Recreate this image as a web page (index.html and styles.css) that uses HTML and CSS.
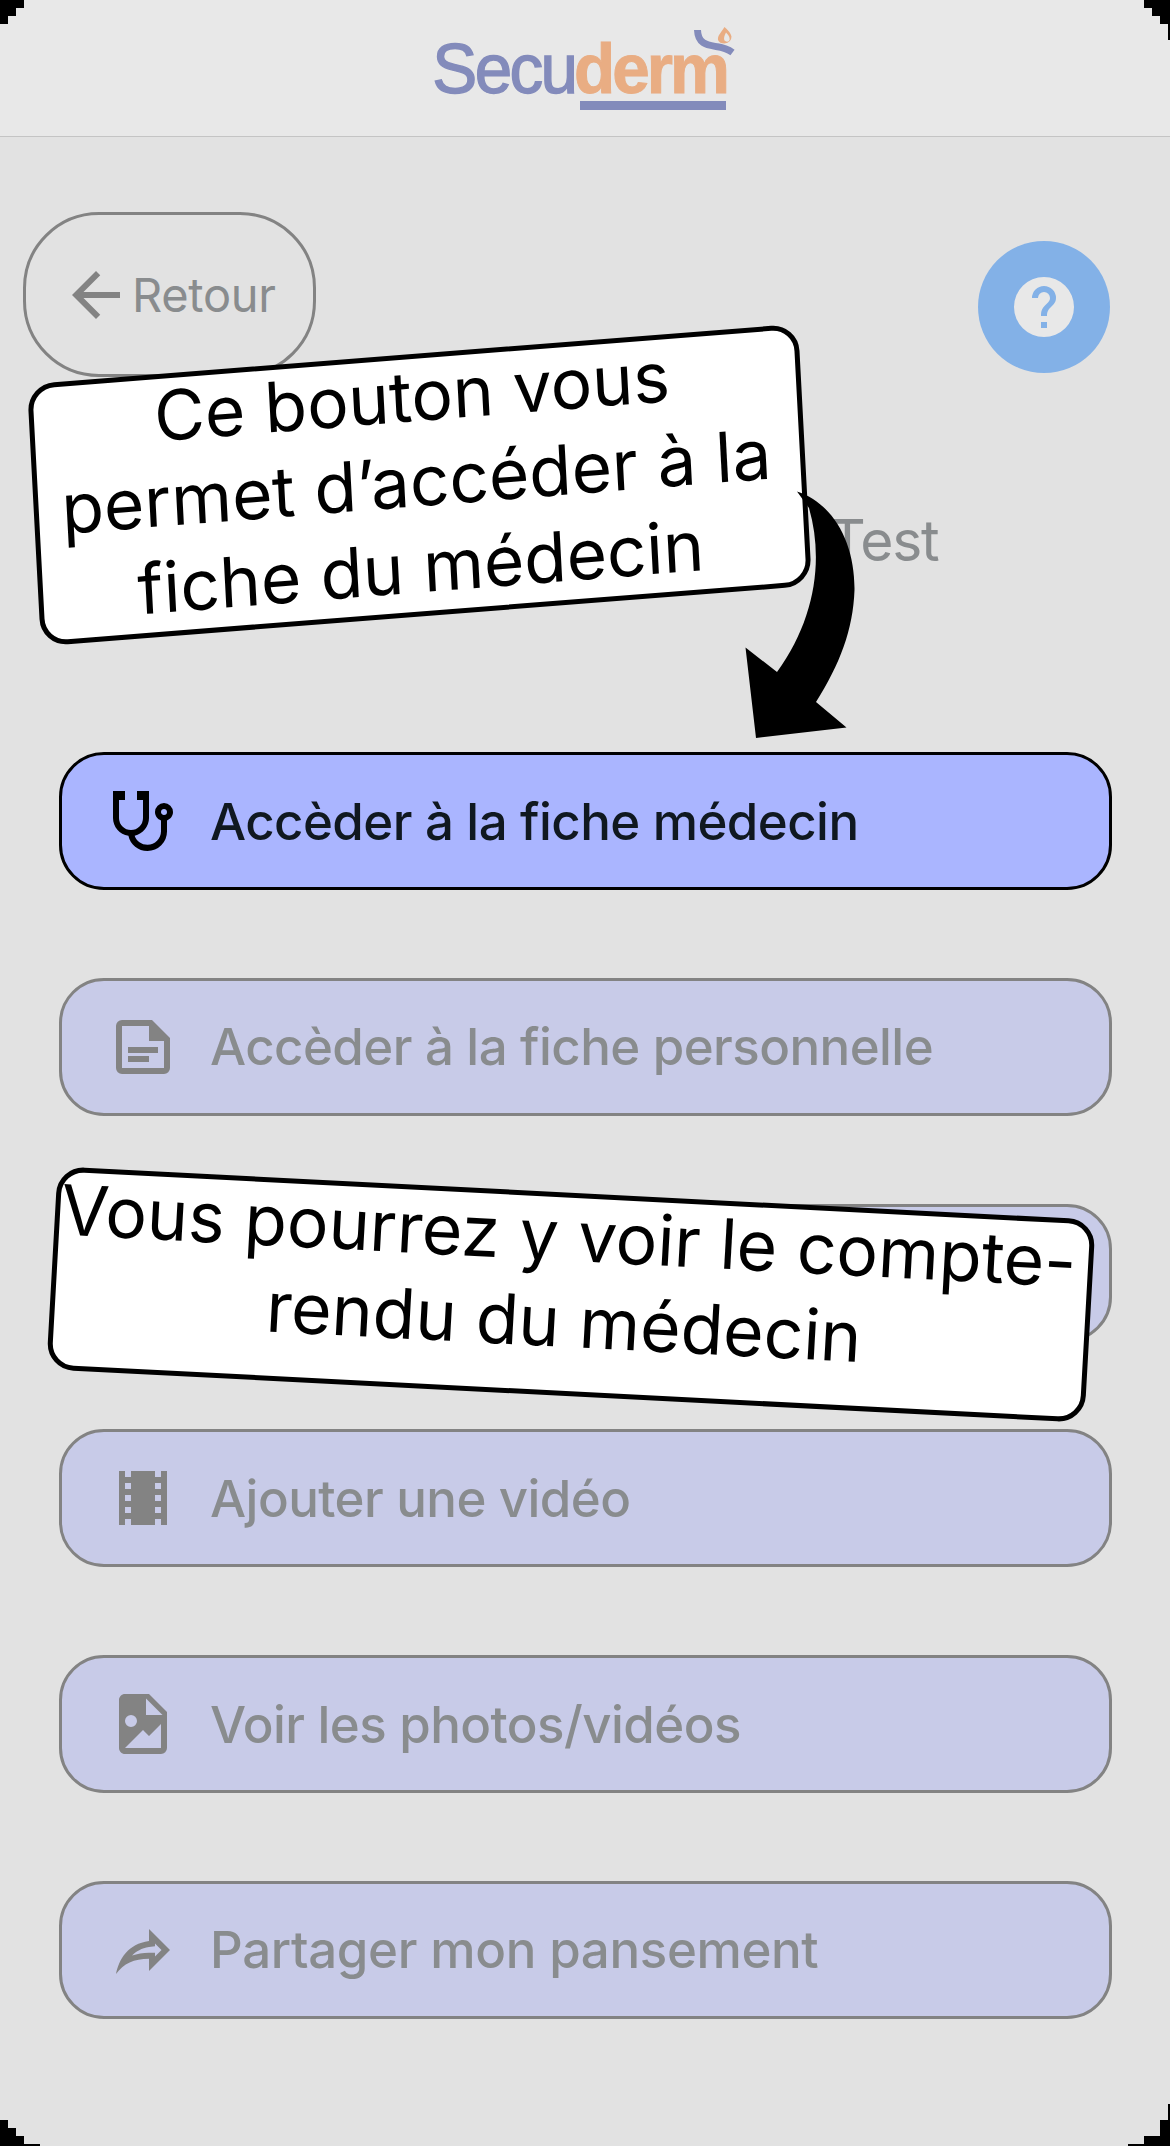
FILE: index.html
```html
<!DOCTYPE html>
<html lang="fr">
<head>
<meta charset="utf-8">
<title>Secuderm</title>
<link rel="stylesheet" href="styles.css">
</head>
<body>
<header class="topbar">
  <svg class="logo" viewBox="0 0 310 100" width="310" height="100">
    <text transform="scale(0.95 1)" x="-2.800" y="73"><tspan class="logo-secu">Secu</tspan><tspan class="logo-derm" dx="-1.500">derm</tspan></text>
    <rect class="logo-line" x="145" y="81" width="146" height="9"/>
    <path class="logo-swoosh" d="M262.500 10C263 24 272 25 281 26.500C288 27.500 292 28.500 297.500 32.500"/>
    <path class="logo-flame" fill-rule="evenodd" d="M289.500 7C286 13 282.500 15 283 20Q284.500 23.500 289.500 23.500Q296.500 22.500 296.500 16.500Q295.500 12 289.500 7ZM291 12.500Q296.500 18 294 21Q291.500 22.500 289.500 20.500Q288 18 291 12.500Z"/>
  </svg>
</header>
<main class="screen">
  <div class="toolbar">
    <button class="back">
      <svg class="icon" viewBox="0 0 24 24"><path d="M20 11H7.83l5.59-5.59L12 4l-8 8 8 8 1.41-1.41L7.83 13H20z"/></svg>
      <span>Retour</span>
    </button>
    <button class="help" aria-label="Aide">
      <svg class="icon" viewBox="0 0 24 24"><path d="M12 2a10 10 0 1 0 0 20 10 10 0 0 0 0-20zm1 17h-2v-2h2zm2.07-7.75l-.9.92C13.45 12.9 13 13.5 13 15h-2v-.5c0-1.1.45-2.1 1.17-2.83l1.24-1.26c.37-.36.59-.86.59-1.41a2 2 0 0 0-4 0H8a4 4 0 0 1 8 0c0 .88-.36 1.68-.93 2.25z"/></svg>
    </button>
  </div>
  <h1 class="title">Test</h1>
  <nav class="menu">
    <a class="card active">
      <svg class="icon" viewBox="0 0 24 24"><path d="M19,8C19.56,8 20,8.43 20,9A1,1 0 0,1 19,10C18.43,10 18,9.55 18,9C18,8.43 18.43,8 19,8M2,2V11C2,13.96 4.19,16.5 7.14,16.91C7.76,19.92 10.42,22 13.5,22A6.5,6.5 0 0,0 20,15.5V11.81C21.16,11.39 22,10.29 22,9A3,3 0 0,0 19,6A3,3 0 0,0 16,9C16,10.29 16.84,11.4 18,11.81V15.41C18,17.91 16,19.91 13.5,19.91C11.5,19.91 9.82,18.7 9.22,16.9C12,16.3 14,13.8 14,11V2H10V5H12V11A4,4 0 0,1 8,15A4,4 0 0,1 4,11V5H6V2H2Z"/></svg>
      <span>Accèder à la fiche médecin</span>
    </a>
    <a class="card">
      <svg class="icon" viewBox="0 0 24 24"><path fill-rule="evenodd" d="M5 3H15L21 9V19A2 2 0 0 1 19 21H5A2 2 0 0 1 3 19V5A2 2 0 0 1 5 3ZM5 5V19H19V10H14V5ZM7 12H17V14H7ZM7 15H14V17H7Z"/></svg>
      <span>Accèder à la fiche personnelle</span>
    </a>
    <a class="card"></a>
    <a class="card">
      <svg class="icon" viewBox="0 0 24 24"><path d="M18,9H16V7H18M18,13H16V11H18M18,17H16V15H18M8,9H6V7H8M8,13H6V11H8M8,17H6V15H8M18,3V5H16V3H8V5H6V3H4V21H6V19H8V21H16V19H18V21H20V3H18Z"/></svg>
      <span>Ajouter une vidéo</span>
    </a>
    <a class="card">
      <svg class="icon" viewBox="0 0 24 24"><path d="M13,9H18.5L13,3.5V9M6,2H14L20,8V20A2,2 0 0,1 18,22H6C4.89,22 4,21.1 4,20V4C4,2.89 4.89,2 6,2M6,20H15L18,20V12L14,16L12,14L6,20M8,9A2,2 0 0,0 6,11A2,2 0 0,0 8,13A2,2 0 0,0 10,11A2,2 0 0,0 8,9Z"/></svg>
      <span>Voir les photos/vidéos</span>
    </a>
    <a class="card share">
      <svg class="icon" viewBox="0 0 24 24"><path fill-rule="evenodd" d="M14,5V9C7,10 4,15 3,20C5.5,16.5 9,14.9 14,14.9V19L21,12L14,5M16,9.83L18.17,12L16,14.17V12.9H14C11.93,12.9 10.07,13.28 8.34,13.85C9.74,12.46 11.54,11.37 14,11L16,10.73Z"/></svg>
      <span>Partager mon pansement</span>
    </a>
  </nav>
</main>
<div class="callout callout-top"><p>Ce bouton vous<br>permet d’accéder à la<br>fiche du médecin</p></div>
<div class="callout callout-bottom"><p>Vous pourrez y voir le compte-<br>rendu du médecin</p></div>
<svg class="arrow" viewBox="740 485 120 260" width="120" height="260">
  <path d="M797 491.5C835 504 855 545 854.500 590C853 630 840 664 816 702L846.500 727.500L756 738L745.500 647.500L777 672C815 620 824 560 809 508Z"/>
</svg>
<svg class="corners" viewBox="0 0 1170 2146" width="1170" height="2146">
  <path d="M0 0H24V8H16V16H8V24H0Z"/>
  <path d="M1170 0H1144V8H1152V16H1160V24H1168V40H1170Z"/>
  <path d="M0 2120H8V2128H16V2136H24V2144H40V2146H0Z"/>
  <path d="M1170 2104H1168V2120H1160V2136H1144V2144H1128V2146H1170Z"/>
</svg>
</body>
</html>
```
FILE: styles.css
```css
* { box-sizing: border-box; }
body {
  margin: 0;
  width: 1170px;
  height: 2146px;
  position: relative;
  overflow: hidden;
  background: #e2e2e2;
  color: #898c8e;
  font-family: Inter, "Liberation Sans", sans-serif;
}
button { font: inherit; color: inherit; padding: 0; }
.topbar {
  height: 137px;
  padding: 20px 0 0 435px;
  background: #e8e8e8;
  border-bottom: 1px solid #c4c4c4;
}
.logo { display: block; font-family: "Liberation Sans", sans-serif; font-size: 71px; overflow: visible; }
.logo-secu { fill: #838bbb; stroke: #838bbb; stroke-width: 1.4px; letter-spacing: -2.8px; }
.logo-derm { fill: #e9ad83; font-weight: 700; stroke: #e9ad83; stroke-width: 1px; letter-spacing: -3.1px; }
.logo-line { fill: #838bbb; }
.logo-swoosh { fill: none; stroke: #838bbb; stroke-width: 7; }
.logo-flame { fill: #e9ad83; }
.icon { width: 72px; height: 72px; flex: none; fill: #838383; }
.toolbar { display: flex; justify-content: space-between; padding: 75px 60px 0 23px; }
.back {
  display: flex;
  align-items: center;
  width: 293px;
  height: 165px;
  padding-left: 34px;
  border: 3px solid #838383;
  border-radius: 76px;
  background: none;
  font-size: 47px;
  letter-spacing: -0.3px;
}
.help {
  display: grid;
  place-items: center;
  width: 132px;
  height: 132px;
  margin-top: 29px;
  border: 0;
  border-radius: 50%;
  background: #83b1e7;
}
.help .icon { fill: #e8e8e8; }
.title {
  margin: 128px 0 0 829px;
  height: 72px;
  line-height: 72px;
  font-size: 57px;
  font-weight: 400;
  letter-spacing: -1.2px;
}
.menu { display: flex; flex-direction: column; gap: 87.8px; margin: 175px 58.5px 0 59px; }
.card {
  display: flex;
  align-items: center;
  gap: 31px;
  height: 138px;
  padding-left: 45px;
  border: 3px solid #838383;
  border-radius: 45px;
  background: #c8cbe8;
  font-size: 51px;
  font-weight: 500;
  letter-spacing: -0.56px;
}
.share { letter-spacing: -0.36px; }
.active { background: #aab5ff; border-color: #000; color: #101820; }
.active .icon { fill: #000; }
.callout {
  position: absolute;
  border: 5px solid #000;
  border-radius: 27px;
  background: #fff;
  color: #000;
  font-size: 69.4px;
  line-height: 86px;
  text-align: center;
  white-space: nowrap;
}
.callout p { margin: -5.5px 6px 0 0; }
.callout-bottom p { margin: -5.5px 11px 0 0; }
.callout-top { left: 33.5px; top: 354px; width: 771px; height: 262px; font-size: 69.2px; line-height: 85.6px; transform: matrix(1, -0.0785, 0.053, 1, 0, 0); }
.callout-bottom { left: 52px; top: 1192.5px; width: 1038px; height: 203px; font-size: 69.5px; transform: matrix(1, 0.0515, -0.056, 1, 0, 0); }
.arrow { position: absolute; left: 740px; top: 485px; }
.corners { position: absolute; left: 0; top: 0; }
```
